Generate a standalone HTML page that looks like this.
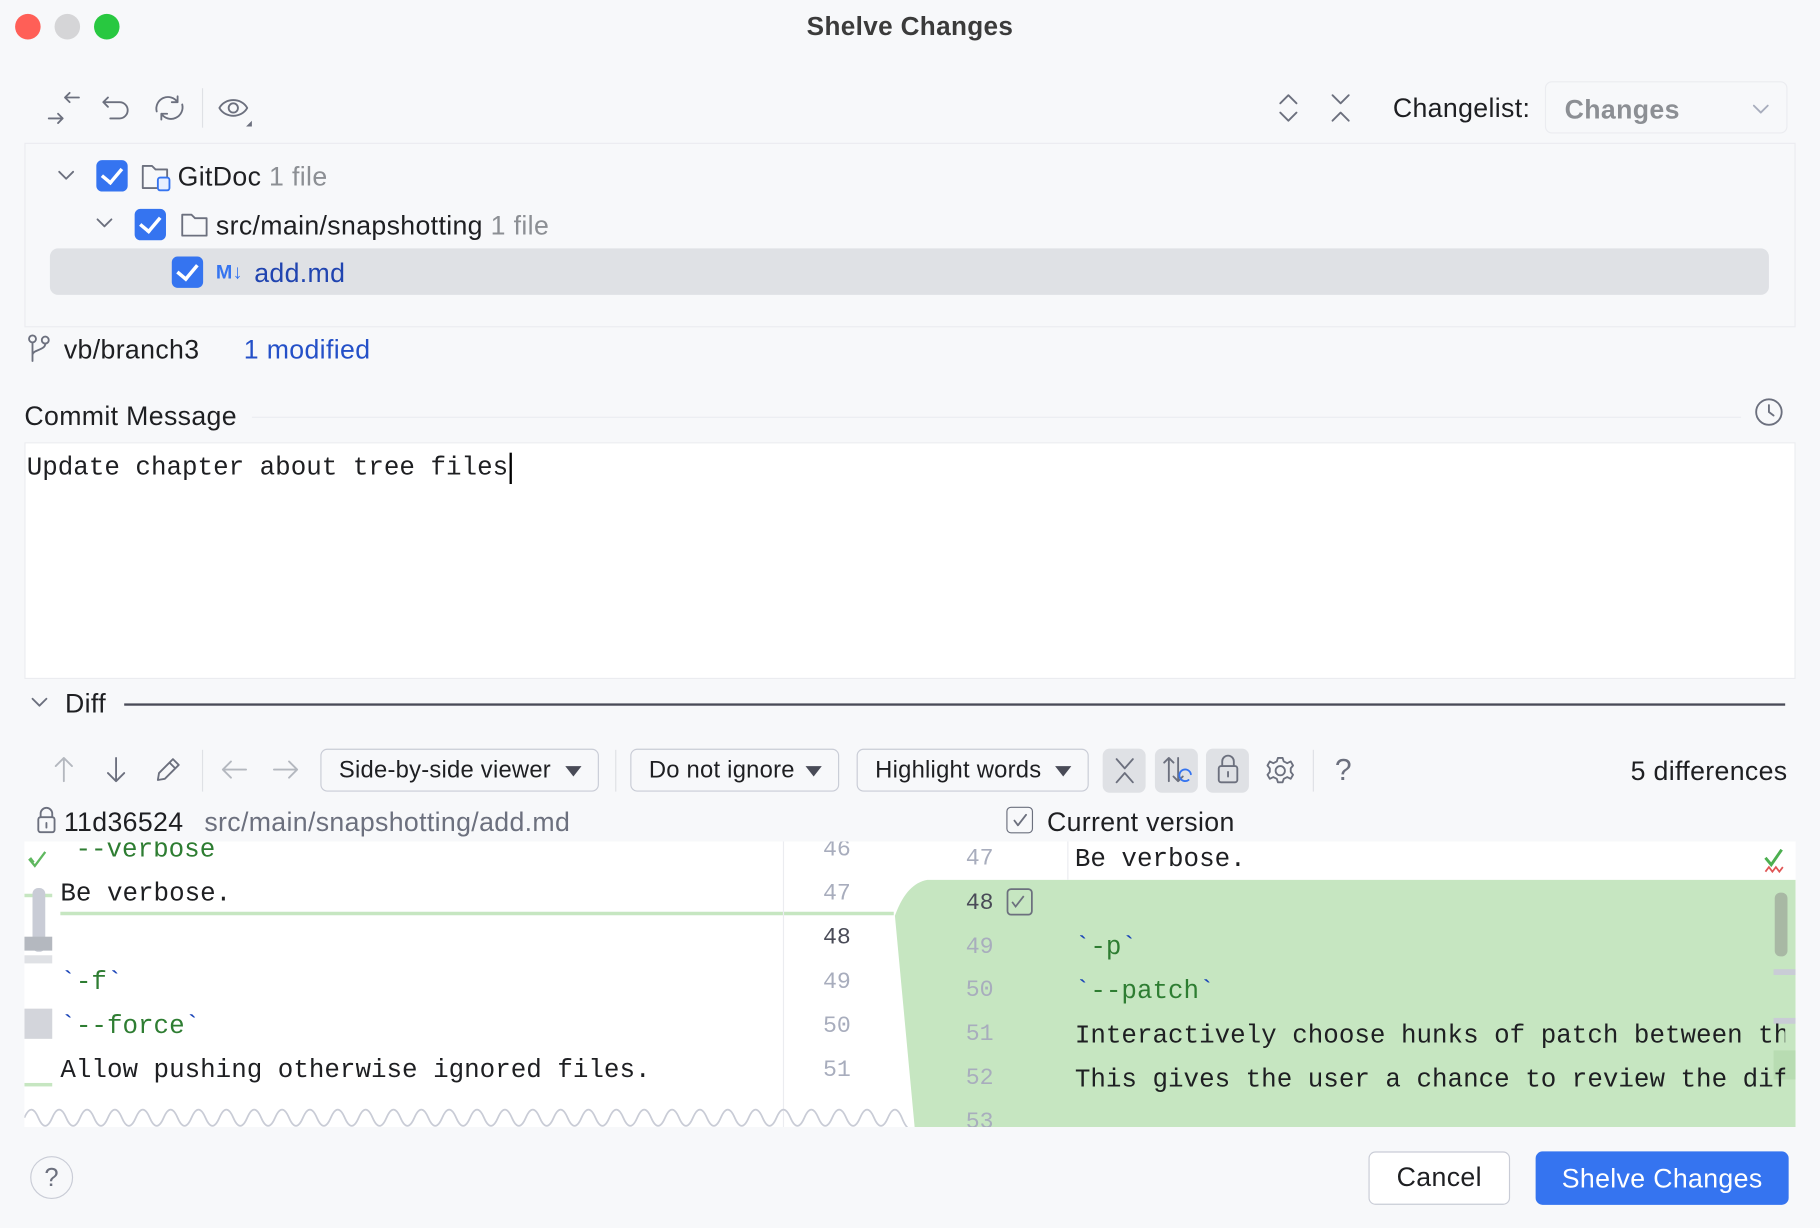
<!DOCTYPE html>
<html><head><meta charset="utf-8"><style>
html,body{margin:0;padding:0;width:1820px;height:1228px;overflow:hidden;background:#f7f8fa}
#s{position:absolute;left:0;top:0;width:1568px;height:1058px;transform:scale(1.16071);transform-origin:0 0;font-family:"Liberation Sans",sans-serif;color:#1e1f22;font-size:23px;letter-spacing:0.3px}
.a{position:absolute;white-space:nowrap}
.m{font-family:"Liberation Mono",monospace;font-size:22.3px;letter-spacing:0}
.cb{position:absolute;width:27px;height:27px;background:#3574f0;border-radius:5px}
.cb:after{content:"";position:absolute;left:8px;top:3px;width:8px;height:14px;border:solid #fff;border-width:0 3px 3px 0;transform:rotate(40deg)}
.dd{position:absolute;height:35px;border:1.5px solid #c9ccd6;border-radius:6px;background:#f7f8fa;font-size:20.5px;letter-spacing:0.2px;line-height:35px;padding-left:15px;box-sizing:content-box}
.dd:after{content:"";position:absolute;right:14px;top:14px;border:7px solid transparent;border-top:9px solid #494b57;border-bottom:0}
.ln{position:absolute;font-family:"Liberation Mono",monospace;font-size:20px;color:#a8adbd;letter-spacing:0}
svg{position:absolute;overflow:visible}
.ic{fill:none;stroke:#6c707e;stroke-width:1.6;stroke-linecap:round;stroke-linejoin:round}
</style></head><body><div id="s">
<div class="a" style="left:13px;top:12px;width:22px;height:22px;border-radius:50%;background:#ff5f57"></div>
<div class="a" style="left:47px;top:12px;width:22px;height:22px;border-radius:50%;background:#d5d5d7"></div>
<div class="a" style="left:81px;top:12px;width:22px;height:22px;border-radius:50%;background:#28c840"></div>
<div class="a" style="left:0;width:1568px;top:10px;text-align:center;font-weight:bold;font-size:22.5px;color:#3b3b3b">Shelve Changes</div>

<svg style="left:40px;top:80px" width="30" height="26" class="ic"><path d="M2 22h12M10 18l4 4-4 4M28 4H16M20 0l-4 4 4 4"/></svg>
<svg style="left:87px;top:80px" width="28" height="26" class="ic"><path d="M6 4L2 8l4 4M2 8h14a7 7 0 010 14H8"/></svg>
<svg style="left:131px;top:80px" width="30" height="26" class="ic"><path d="M4 16a10 10 0 0118-8M26 10a10 10 0 01-18 8M22 3v5h-5M8 23v-5h5"/></svg>
<div class="a" style="left:174px;top:76px;width:1px;height:34px;background:#dfe1e5"></div>
<svg style="left:187px;top:82px" width="32" height="26" class="ic"><path d="M2 11C7 2 21 2 26 11C21 20 7 20 2 11Z"/><circle cx="14" cy="11" r="4"/><path d="M30 22l-5 5h5z" fill="#6c707e" stroke="none"/></svg>
<svg style="left:1100px;top:80px" width="20" height="26" class="ic"><path d="M3 9l7-7 7 7M3 17l7 7 7-7"/></svg>
<svg style="left:1145px;top:80px" width="20" height="26" class="ic"><path d="M3 2l7 7 7-7M3 24l7-7 7 7"/></svg>
<div class="a" style="left:1200px;top:80px">Changelist:</div>
<div class="a" style="left:1331px;top:70px;width:209px;height:45px;border:1.5px solid #ebecf0;border-radius:6px;box-sizing:border-box"></div>
<div class="a" style="left:1348px;top:81px;color:#8c8f94;font-weight:bold">Changes</div>
<svg style="left:1510px;top:89px" width="14" height="10" class="ic"><path d="M1 2l6 6 6-6" stroke="#a8adbd"/></svg>

<div class="a" style="left:21px;top:123px;width:1526px;height:159px;border:1.5px solid #ebecf0;box-sizing:border-box"></div>
<svg style="left:50px;top:146px" width="14" height="10" class="ic"><path d="M1 2l6 6 6-6"/></svg>
<div class="cb" style="left:83px;top:138px"></div>
<svg style="left:121px;top:140px" width="28" height="26" class="ic"><path d="M2 22V3h8l3 3h10v7M2 22h12"/><rect x="15" y="13" width="10" height="11" rx="2" stroke="#3574f0" fill="#e8efff"/></svg>
<div class="a" style="left:153px;top:139px">GitDoc <span style="color:#8c8f94">1 file</span></div>
<svg style="left:83px;top:187px" width="14" height="10" class="ic"><path d="M1 2l6 6 6-6"/></svg>
<div class="cb" style="left:116px;top:180px"></div>
<svg style="left:155px;top:182px" width="26" height="24" class="ic"><path d="M2 21V3h8l3 3h10v15z"/></svg>
<div class="a" style="left:186px;top:181px">src/main/snapshotting <span style="color:#8c8f94">1 file</span></div>
<div class="a" style="left:43px;top:214px;width:1481px;height:40px;background:#dfe1e5;border-radius:7px"></div>
<div class="cb" style="left:148px;top:221px"></div>
<div class="a" style="left:186px;top:225px;color:#3574f0;font-weight:bold;font-size:17px">M↓</div>
<div class="a" style="left:219px;top:222px;color:#2044b0">add.md</div>

<svg style="left:24px;top:288px" width="22" height="24" class="ic"><circle cx="4" cy="4" r="3"/><circle cx="15" cy="5" r="3"/><path d="M4 7v16M15 8c0 6-11 5-11 10"/></svg>
<div class="a" style="left:55px;top:288px">vb/branch3</div>
<div class="a" style="left:210px;top:288px;color:#2450c8">1 modified</div>

<div class="a" style="left:21px;top:345px">Commit Message</div>
<div class="a" style="left:217px;top:359px;width:1283px;height:1px;background:#ebecf0"></div>
<svg style="left:1512px;top:343px" width="26" height="26" class="ic"><circle cx="12" cy="12" r="11"/><path d="M12 6v6l4 3"/></svg>
<div class="a" style="left:21px;top:381px;width:1526px;height:204px;background:#fff;border:1.5px solid #ebecf0;box-sizing:border-box"></div>
<div class="a m" style="left:23px;top:390px">Update chapter about tree files</div>
<div class="a" style="left:439px;top:390px;width:2px;height:27px;background:#000"></div>

<svg style="left:27px;top:600px" width="14" height="10" class="ic"><path d="M1 2l6 6 6-6"/></svg>
<div class="a" style="left:56px;top:593px">Diff</div>
<div class="a" style="left:107px;top:606px;width:1431px;height:1.5px;background:#494b57"></div>

<svg style="left:46px;top:651px" width="18" height="24" class="ic"><path d="M9 22V2M2 9l7-7 7 7" stroke="#b4b8bf"/></svg>
<svg style="left:91px;top:651px" width="18" height="24" class="ic"><path d="M9 2v20M2 15l7 7 7-7"/></svg>
<svg style="left:133px;top:651px" width="24" height="24" class="ic"><path d="M3 21l1-6L16 3l5 5L9 20z M13 6l5 5"/></svg>
<div class="a" style="left:174px;top:646px;width:1px;height:36px;background:#dfe1e5"></div>
<svg style="left:190px;top:653px" width="24" height="20" class="ic"><path d="M22 10H2M9 3l-7 7 7 7" stroke="#b4b8bf"/></svg>
<svg style="left:234px;top:653px" width="24" height="20" class="ic"><path d="M2 10h20M15 3l7 7-7 7" stroke="#b4b8bf"/></svg>
<div class="dd" style="left:276px;top:645px;width:223px">Side-by-side viewer</div>
<div class="a" style="left:530px;top:646px;width:1px;height:36px;background:#dfe1e5"></div>
<div class="dd" style="left:543px;top:645px;width:163px">Do not ignore</div>
<div class="dd" style="left:738px;top:645px;width:183px">Highlight words</div>
<div class="a" style="left:950px;top:645px;width:37px;height:38px;background:#dfe1e5;border-radius:6px"></div>
<div class="a" style="left:995px;top:645px;width:37px;height:38px;background:#dfe1e5;border-radius:6px"></div>
<div class="a" style="left:1039px;top:645px;width:37px;height:38px;background:#dfe1e5;border-radius:6px"></div>
<svg style="left:960px;top:652px" width="18" height="24" class="ic"><path d="M2 2l7 8 7-8M2 22l7-8 7 8"/></svg>
<svg style="left:1002px;top:651px" width="26" height="26" class="ic"><path d="M5 22V2M1 6l4-4 4 4M13 2v20M9 18l4 4 4-4"/><path d="M24 16a5 5 0 10-2 5" stroke="#3574f0"/></svg>
<svg style="left:1048px;top:650px" width="20" height="26" class="ic"><rect x="2" y="10" width="16" height="14" rx="2"/><path d="M5 10V6a5 5 0 0110 0v4M10 15v4"/></svg>
<svg style="left:1090px;top:651px" width="26" height="26" class="ic"><circle cx="13" cy="13" r="4"/><path d="M11 2h4l1 3 3 1.5 3-1.5 2 3.5-2 2.5v3l2 2.5-2 3.5-3-1.5-3 1.5-1 3h-4l-1-3-3-1.5-3 1.5-2-3.5 2-2.5v-3l-2-2.5 2-3.5 3 1.5 3-1.5z"/></svg>
<div class="a" style="left:1131px;top:646px;width:1px;height:36px;background:#dfe1e5"></div>
<div class="a" style="left:1150px;top:648px;color:#6c707e;font-size:26px">?</div>
<div class="a" style="left:1390px;top:651px;width:150px;text-align:right">5 differences</div>

<svg style="left:31px;top:695px" width="18" height="24" class="ic"><rect x="2" y="9" width="14" height="13" rx="2"/><path d="M4 9V6a5 5 0 0110 0v3M9 14v4"/></svg>
<div class="a" style="left:55px;top:695px">11d36524<span style="color:#6c707e;margin-left:18px">src/main/snapshotting/add.md</span></div>
<div class="a" style="left:867px;top:695px;width:23px;height:23px;border:1.5px solid #6c707e;border-radius:4px;box-sizing:border-box"></div>
<svg style="left:871px;top:700px" width="16" height="14" class="ic"><path d="M3 7l3 4 7-9"/></svg>
<div class="a" style="left:902px;top:695px">Current version</div>

<div class="a" style="left:21px;top:725px;width:1526px;height:246px;background:#fff;overflow:hidden">
  <svg style="left:0;top:0" width="1526" height="246">
    <path d="M767 246 L750 64 Q760 36 778 33 L1526 33 L1526 246 Z" fill="#c6e6c1"/>
    <path d="M31 62 H749" stroke="#c6e6c1" stroke-width="3"/>
    <path d="M654 0V246" stroke="#ebecf0"/>
    <path d="M899 0V33" stroke="#ebecf0"/>
    <path d="M0 238 q6-14 12 0 q6 14 12 0 q6-14 12 0 q6 14 12 0 q6-14 12 0 q6 14 12 0 q6-14 12 0 q6 14 12 0 q6-14 12 0 q6 14 12 0 q6-14 12 0 q6 14 12 0 q6-14 12 0 q6 14 12 0 q6-14 12 0 q6 14 12 0 q6-14 12 0 q6 14 12 0 q6-14 12 0 q6 14 12 0 q6-14 12 0 q6 14 12 0 q6-14 12 0 q6 14 12 0 q6-14 12 0 q6 14 12 0 q6-14 12 0 q6 14 12 0 q6-14 12 0 q6 14 12 0 q6-14 12 0 q6 14 12 0 q6-14 12 0 q6 14 12 0 q6-14 12 0 q6 14 12 0 q6-14 12 0 q6 14 12 0 q6-14 12 0 q6 14 12 0 q6-14 12 0 q6 14 12 0 q6-14 12 0 q6 14 12 0 q6-14 12 0 q6 14 12 0 q6-14 12 0 q6 14 12 0 q6-14 12 0 q6 14 12 0 q6-14 12 0 q6 14 12 0 q6-14 12 0 q6 14 12 0 q6-14 12 0 q6 14 12 0 q6-14 12 0 q6 14 12 0 q6-14 12 0 q6 14 12 0 q6-14 12 0 q6 14 12 0 q6-14 12 0 q4 10 8 10" fill="none" stroke="#c9ccd6" stroke-width="1.5"/>
    <path d="M4 15l5 6 9-12M8 18l-3-4" fill="none" stroke="#5fb85f" stroke-width="2"/>
    <rect x="0" y="45" width="24" height="3" fill="#c6e6c1"/>
    <rect x="7" y="40" width="11" height="55" rx="5" fill="#c9ccd6"/>
    <rect x="0" y="82" width="24" height="12" fill="#b4b8bf"/>
    <rect x="0" y="98" width="24" height="7" fill="#dfe1e5"/>
    <rect x="0" y="144" width="24" height="26" fill="#d3d5db"/>
    <rect x="0" y="208" width="24" height="3" fill="#c6e6c1"/>
    <path d="M1500 14l5 6 9-13" fill="none" stroke="#4caf50" stroke-width="2.5"/>
    <path d="M1500 26l3-4 3 4 3-4 3 4 3-4" fill="none" stroke="#e05555" stroke-width="1.5"/>
    <rect x="1508" y="44" width="11" height="55" rx="5" fill="#a8b8a4"/>
    <rect x="1507" y="110" width="19" height="5" fill="#c9ccd6"/>
    <rect x="1507" y="152" width="19" height="5" fill="#c9ccd6"/>
    <rect x="1507" y="180" width="19" height="25" fill="#b8dcb2"/>
    <rect x="847" y="41" width="21" height="22" rx="3" fill="none" stroke="#6c707e" stroke-width="1.5"/>
    <path d="M851 52l3 4 7-9" fill="none" stroke="#6c707e" stroke-width="1.5"/>
  </svg>
  <div class="a m" style="left:44px;top:-6px;color:#2e7d32">--verbose</div>
  <div class="a m" style="left:31px;top:32px">Be verbose.</div>
  <div class="a m" style="left:31px;top:108px;color:#2e7d32"><span style="color:#1a44b8">`</span>-f<span style="color:#1a44b8">`</span></div>
  <div class="a m" style="left:31px;top:146px;color:#2e7d32"><span style="color:#1a44b8">`</span>--force<span style="color:#1a44b8">`</span></div>
  <div class="a m" style="left:31px;top:184px">Allow pushing otherwise ignored files.</div>
  <div class="ln" style="left:688px;top:-4px">46</div>
  <div class="ln" style="left:688px;top:34px">47</div>
  <div class="ln" style="left:688px;top:72px;color:#494b57">48</div>
  <div class="ln" style="left:688px;top:110px">49</div>
  <div class="ln" style="left:688px;top:148px">50</div>
  <div class="ln" style="left:688px;top:186px">51</div>
  <div class="ln" style="left:811px;top:4px">47</div>
  <div class="ln" style="left:811px;top:42px;color:#494b57">48</div>
  <div class="ln" style="left:811px;top:80px">49</div>
  <div class="ln" style="left:811px;top:117px">50</div>
  <div class="ln" style="left:811px;top:155px">51</div>
  <div class="ln" style="left:811px;top:193px">52</div>
  <div class="ln" style="left:811px;top:231px">53</div>
  <div class="a m" style="left:905px;top:2px">Be verbose.</div>
  <div class="a m" style="left:905px;top:78px;color:#2e7d32"><span style="color:#1a44b8">`</span>-p<span style="color:#1a44b8">`</span></div>
  <div class="a m" style="left:905px;top:116px;color:#2e7d32"><span style="color:#1a44b8">`</span>--patch<span style="color:#1a44b8">`</span></div>
  <div class="a m" style="left:905px;top:154px;width:612px;overflow:hidden">Interactively choose hunks of patch between the</div>
  <div class="a m" style="left:905px;top:192px;width:612px;overflow:hidden">This gives the user a chance to review the diff</div>
</div>

<div class="a" style="left:26px;top:996px;width:35px;height:35px;border:1.5px solid #c9ccd6;border-radius:50%;text-align:center;line-height:35px;color:#6c707e;font-size:22px">?</div>
<div class="a" style="left:1179px;top:992px;width:122px;height:46px;border:1.5px solid #c9ccd6;border-radius:6px;background:#fff;box-sizing:border-box;text-align:center;line-height:43px">Cancel</div>
<div class="a" style="left:1323px;top:992px;width:218px;height:46px;background:#3574f0;border-radius:6px;color:#fff;text-align:center;line-height:46px">Shelve Changes</div>
</div></body></html>
